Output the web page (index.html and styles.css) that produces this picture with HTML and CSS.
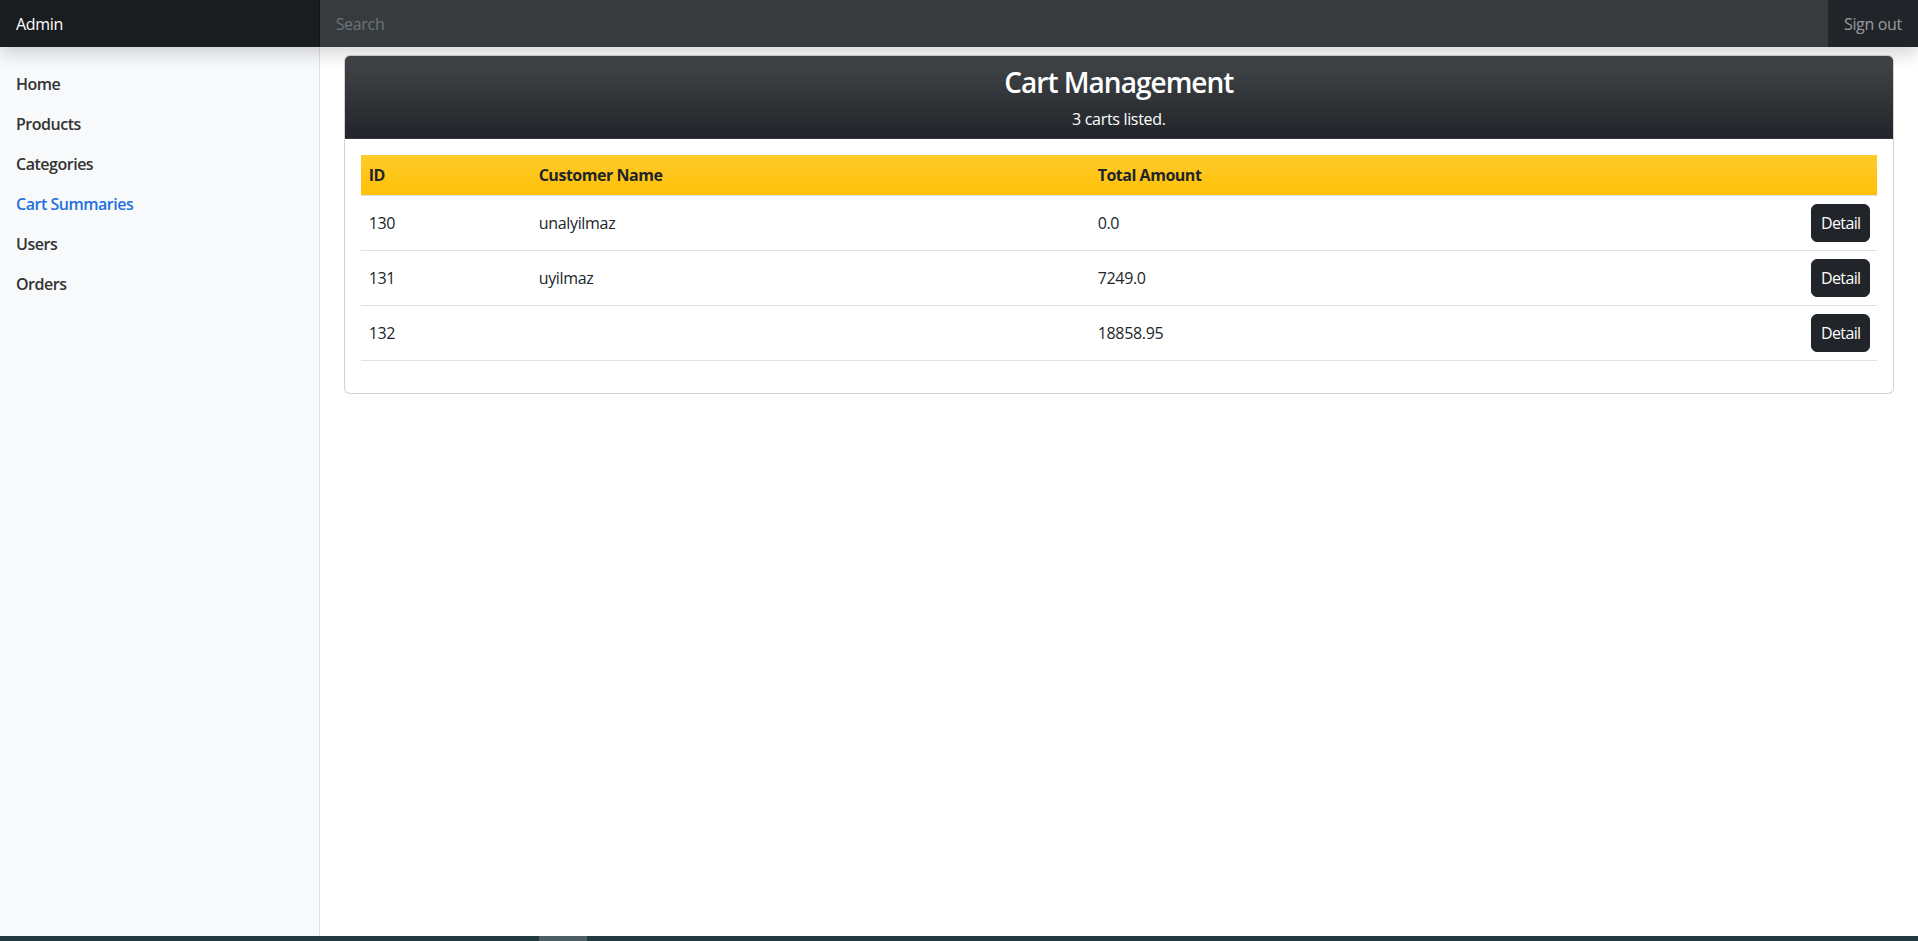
FILE: index.html
```html
<!DOCTYPE html>
<html lang="en">
<head>
<meta charset="utf-8">
<title>Admin - Cart Management</title>
<link rel="stylesheet" href="styles.css">
</head>
<body>
<header class="navbar">
  <a class="navbar-brand" href="#">Admin</a>
  <input class="search" type="text" placeholder="Search" aria-label="Search">
  <a class="signout" href="#">Sign out</a>
</header>
<div class="layout">
  <nav class="sidebar">
    <ul class="nav">
      <li><a class="nav-link" href="#">Home</a></li>
      <li><a class="nav-link" href="#">Products</a></li>
      <li><a class="nav-link" href="#">Categories</a></li>
      <li><a class="nav-link active" href="#">Cart Summaries</a></li>
      <li><a class="nav-link" href="#">Users</a></li>
      <li><a class="nav-link" href="#">Orders</a></li>
    </ul>
  </nav>
  <main class="main">
    <section class="card">
      <div class="card-header">
        <h3 class="card-title">Cart Management</h3>
        <p class="card-sub">3 carts listed.</p>
      </div>
      <div class="card-body">
        <table class="table">
          <thead>
            <tr>
              <th class="col-id">ID</th>
              <th class="col-name">Customer Name</th>
              <th class="col-total">Total Amount</th>
              <th class="col-action"></th>
            </tr>
          </thead>
          <tbody>
            <tr>
              <td>130</td>
              <td>unalyilmaz</td>
              <td>0.0</td>
              <td class="cell-action"><button class="btn" type="button">Detail</button></td>
            </tr>
            <tr>
              <td>131</td>
              <td>uyilmaz</td>
              <td>7249.0</td>
              <td class="cell-action"><button class="btn" type="button">Detail</button></td>
            </tr>
            <tr>
              <td>132</td>
              <td></td>
              <td>18858.95</td>
              <td class="cell-action"><button class="btn" type="button">Detail</button></td>
            </tr>
          </tbody>
        </table>
      </div>
    </section>
  </main>
</div>
<div class="taskbar"><span class="taskbar-thumb"></span></div>
</body>
</html>
```
FILE: styles.css
```css
* { box-sizing: border-box; }

html, body { height: 100%; }

body {
  margin: 0;
  display: flex;
  flex-direction: column;
  font-family: "Open Sans", "Noto Sans", "Liberation Sans", sans-serif;
  font-size: 16px;
  line-height: 1.5;
  letter-spacing: -0.02em;
  color: #212529;
  background: #fff;
  overflow: hidden;
}

a { text-decoration: none; }

/* Top navbar */
.navbar {
  flex: 0 0 47px;
  display: flex;
  align-items: stretch;
  background: #212529;
  box-shadow: 0 .5rem 1rem rgba(0, 0, 0, .15);
  position: relative;
  z-index: 10;
}

.navbar-brand {
  flex: 0 0 16.6667%;
  display: flex;
  align-items: center;
  padding: 0 16px;
  color: #fff;
  font-size: 16px;
  background: #1a1d20;
  box-shadow: inset -1px 0 0 rgba(0, 0, 0, .25);
}

.search {
  flex: 1 1 auto;
  min-width: 0;
  border: 0;
  border-radius: 0;
  outline: none;
  padding: 0 16px;
  font: inherit;
  letter-spacing: inherit;
  color: #fff;
  background: #373b3e;
}

.search::placeholder { color: #6c757d; }

.signout {
  display: flex;
  align-items: center;
  padding: 0 16px;
  color: rgba(255, 255, 255, .55);
  white-space: nowrap;
}

/* Layout */
.layout {
  flex: 1 1 auto;
  display: flex;
  min-height: 0;
}

.sidebar {
  flex: 0 0 16.6667%;
  background: #f8f9fa;
  box-shadow: inset -1px 0 0 rgba(0, 0, 0, .1);
  padding-top: 17px;
}

.nav {
  list-style: none;
  margin: 0;
  padding: 0;
}

.nav-link {
  display: block;
  padding: 8px 16px;
  font-weight: 600;
  letter-spacing: -0.03em;
  color: #333;
}

.nav-link.active { color: #2470dc; }

.main {
  flex: 1 1 auto;
  padding: 8px 24px 0;
  min-width: 0;
}

/* Card */
.card {
  border: 1px solid rgba(0, 0, 0, .175);
  border-radius: 6px;
  background: #fff;
}

.card-header {
  padding: 8px 16px 7px;
  text-align: center;
  color: #fff;
  background-color: #212529;
  background-image: linear-gradient(180deg, rgba(255, 255, 255, .15), rgba(255, 255, 255, 0));
  border-bottom: 1px solid rgba(0, 0, 0, .175);
  border-radius: 5px 5px 0 0;
}

.card-title {
  margin: 0 0 7px;
  padding-top: 2px;
  font-size: 28px;
  line-height: 1.2;
  font-weight: 600;
  letter-spacing: -0.035em;
}

.card-sub { margin: 0; }

.card-body { padding: 16px; }

/* Table */
.table {
  width: 100%;
  margin-bottom: 16px;
  border-collapse: collapse;
  table-layout: fixed;
}

.table th,
.table td {
  padding: 8px;
  border-bottom: 1px solid #dee2e6;
  text-align: left;
  vertical-align: middle;
}

.table thead th {
  font-weight: 700;
  letter-spacing: -0.03em;
  background-color: #ffc107;
  background-image: linear-gradient(180deg, rgba(255, 255, 255, .15), rgba(255, 255, 255, 0));
  color: #212529;
}

.col-id { width: 170px; }
.col-name { width: 559px; }
.col-action { width: 74px; }

.table td.cell-action { text-align: right; }

.btn {
  display: inline-block;
  padding: 6px 9px;
  font: inherit;
  letter-spacing: -0.04em;
  line-height: 24px;
  color: #fff;
  background: #212529;
  border: 1px solid #212529;
  border-radius: 6px;
  cursor: pointer;
}

/* Bottom strip */
.taskbar {
  flex: 0 0 5px;
  display: flex;
  padding-left: 539px;
  background: #22393f;
}

.taskbar-thumb {
  width: 48px;
  background: #4d5e62;
}
```
